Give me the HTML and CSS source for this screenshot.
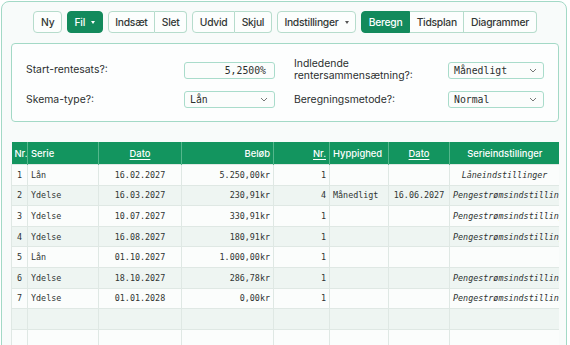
FILE: index.html
```html
<!DOCTYPE html>
<html lang="da">
<head>
  <meta charset="UTF-8">
  <meta name="viewport" content="width=device-width, initial-scale=1.0">
  <title>Lånberegner</title>
  <link rel="stylesheet" href="styles.css">
</head>
<body>
  <div class="app">
    <div class="toolbar">
      <button class="btn">Ny</button>
      <button class="btn btn-green">Fil <span class="caret"></span></button>
      <div class="group">
        <button class="btn">Indsæt</button>
        <button class="btn">Slet</button>
      </div>
      <div class="group">
        <button class="btn">Udvid</button>
        <button class="btn">Skjul</button>
      </div>
      <button class="btn">Indstillinger <span class="caret caret-dark"></span></button>
      <div class="group">
        <button class="btn btn-green">Beregn</button>
        <button class="btn">Tidsplan</button>
        <button class="btn">Diagrammer</button>
      </div>
    </div>

    <div class="settings">
      <label class="lbl">Start-rentesats?:</label>
      <div class="field field-num">5,2500%</div>
      <label class="lbl">Indledende<br>rentersammensætning?:</label>
      <div class="field field-sel">Månedligt <svg class="chev" width="8" height="5" viewBox="0 0 8 5"><path d="M1 1l3 3 3-3" fill="none" stroke="#777" stroke-width="1"/></svg></div>

      <label class="lbl">Skema-type?:</label>
      <div class="field field-sel">Lån <svg class="chev" width="8" height="5" viewBox="0 0 8 5"><path d="M1 1l3 3 3-3" fill="none" stroke="#777" stroke-width="1"/></svg></div>
      <label class="lbl">Beregningsmetode?:</label>
      <div class="field field-sel">Normal <svg class="chev" width="8" height="5" viewBox="0 0 8 5"><path d="M1 1l3 3 3-3" fill="none" stroke="#777" stroke-width="1"/></svg></div>
    </div>

    <div class="grid-wrap">
      <table class="grid">
        <colgroup>
          <col style="width:16px"><col style="width:71px"><col style="width:83px"><col style="width:92px">
          <col style="width:56px"><col style="width:59px"><col style="width:61px"><col style="width:110px">
        </colgroup>
        <thead>
          <tr>
            <th class="l">Nr.</th>
            <th class="l">Serie</th>
            <th class="c"><u>Dato</u></th>
            <th class="r">Beløb</th>
            <th class="r"><u>Nr.</u></th>
            <th class="l">Hyppighed</th>
            <th class="c"><u>Dato</u></th>
            <th class="c">Serieindstillinger</th>
          </tr>
        </thead>
        <tbody>
          <tr><td class="c">1</td><td>Lån</td><td class="c">16.02.2027</td><td class="r">5.250,00kr</td><td class="r">1</td><td></td><td></td><td class="c i">Låneindstillinger</td></tr>
          <tr><td class="c">2</td><td>Ydelse</td><td class="c">16.03.2027</td><td class="r">230,91kr</td><td class="r">4</td><td>Månedligt</td><td class="c">16.06.2027</td><td class="c i">Pengestrømsindstillinger</td></tr>
          <tr><td class="c">3</td><td>Ydelse</td><td class="c">10.07.2027</td><td class="r">330,91kr</td><td class="r">1</td><td></td><td></td><td class="c i">Pengestrømsindstillinger</td></tr>
          <tr><td class="c">4</td><td>Ydelse</td><td class="c">16.08.2027</td><td class="r">180,91kr</td><td class="r">1</td><td></td><td></td><td class="c i">Pengestrømsindstillinger</td></tr>
          <tr><td class="c">5</td><td>Lån</td><td class="c">01.10.2027</td><td class="r">1.000,00kr</td><td class="r">1</td><td></td><td></td><td></td></tr>
          <tr><td class="c">6</td><td>Ydelse</td><td class="c">18.10.2027</td><td class="r">286,78kr</td><td class="r">1</td><td></td><td></td><td class="c i">Pengestrømsindstillinger</td></tr>
          <tr><td class="c">7</td><td>Ydelse</td><td class="c">01.01.2028</td><td class="r">0,00kr</td><td class="r">1</td><td></td><td></td><td class="c i">Pengestrømsindstillinger</td></tr>
          <tr><td></td><td></td><td></td><td></td><td></td><td></td><td></td><td></td></tr>
          <tr><td></td><td></td><td></td><td></td><td></td><td></td><td></td><td></td></tr>
        </tbody>
      </table>
    </div>
  </div>
</body>
</html>
```

FILE: styles.css
```css
/* page */
body { margin: 0; background: #ffffff; font-family: Inter, "Noto Sans", sans-serif; color: #2b2f2e; overflow: hidden; }

.app {
  margin: 1px 3px 0 1px;
  border: 1px solid #a3d9c6;
  border-radius: 8px;
  background: #f8fbfa;
  padding: 9px 7px 0 9px;
  height: 400px;
}

/* toolbar */
.toolbar { display: flex; justify-content: center; gap: 5px; height: 22px; margin-bottom: 10px; }
.group { display: flex; }
.btn {
  height: 22px;
  padding: 0 6.6px;
  border: 1px solid #b6dccc;
  border-radius: 4px;
  background: #fcfefd;
  font-family: Inter, sans-serif;
  font-size: 10.3px;
  letter-spacing: -0.25px;
  font-weight: 500;
  color: #333836;
  display: flex;
  align-items: center;
  gap: 6px;
}
.group .btn { border-radius: 0; }
.group .btn + .btn { border-left: none; }
.group .btn:first-child { border-radius: 4px 0 0 4px; }
.group .btn:last-child { border-radius: 0 4px 4px 0; }
.btn-green { background: #138a5c; border-color: #138a5c; color: #ffffff; }
.caret { width: 0; height: 0; border-left: 2.5px solid transparent; border-right: 2.5px solid transparent; border-top: 3px solid #ffffff; }
.caret-dark { border-top-color: #555; }

/* settings panel */
.settings {
  display: grid;
  grid-template-columns: 158px 110px 154px 96px;
  align-items: center;
  row-gap: 9px;
  border: 1px solid #a3d9c6;
  border-radius: 4px;
  background: #fdfefe;
  padding: 14px 0 13px 14px;
}
.lbl { font-size: 10.4px; color: #2b2f2e; line-height: 12px; }
.field {
  height: 17px;
  box-sizing: border-box;
  border: 1px solid #a9dccb;
  border-radius: 3px;
  background: #fbfdfc;
  font-family: "DejaVu Sans Mono", monospace;
  font-size: 9.8px;
  color: #2b2f2e;
  display: flex;
  align-items: center;
}
.field-num { width: 91px; justify-content: flex-end; padding-right: 8px; }
.field-sel { justify-content: space-between; padding: 0 6px 0 5px; }
.settings .field-sel:nth-child(6) { width: 91px; }
.chev { flex: none; }

/* table */
.grid-wrap { margin-top: 20px; width: 548px; overflow: hidden; }
.grid { border-collapse: collapse; table-layout: fixed; width: 548px; }
.grid th {
  height: 22px;
  background: #13955f;
  color: #ffffff;
  font-size: 9.4px;
  font-weight: 500;
  padding: 0 3px;
  border-left: 1px solid #55b78c;
  white-space: nowrap;
  overflow: hidden;
}
.grid th:first-child { border-left: none; }
.grid td {
  height: 19.6px;
  padding: 0 3px;
  border: 1px solid #dfe8e4;
  font-family: "DejaVu Sans Mono", monospace;
  font-size: 8.4px;
  color: #2f3432;
  white-space: nowrap;
  overflow: hidden;
  background: #fbfdfc;
}
.grid tbody tr:nth-child(even) td { background: #eef5f2; }
.grid .l { text-align: left; }
.grid .c { text-align: center; }
.grid .r { text-align: right; }
.grid .i { font-style: italic; text-align: center; }
.grid u { text-decoration-thickness: 1px; text-underline-offset: 2px; }
```
